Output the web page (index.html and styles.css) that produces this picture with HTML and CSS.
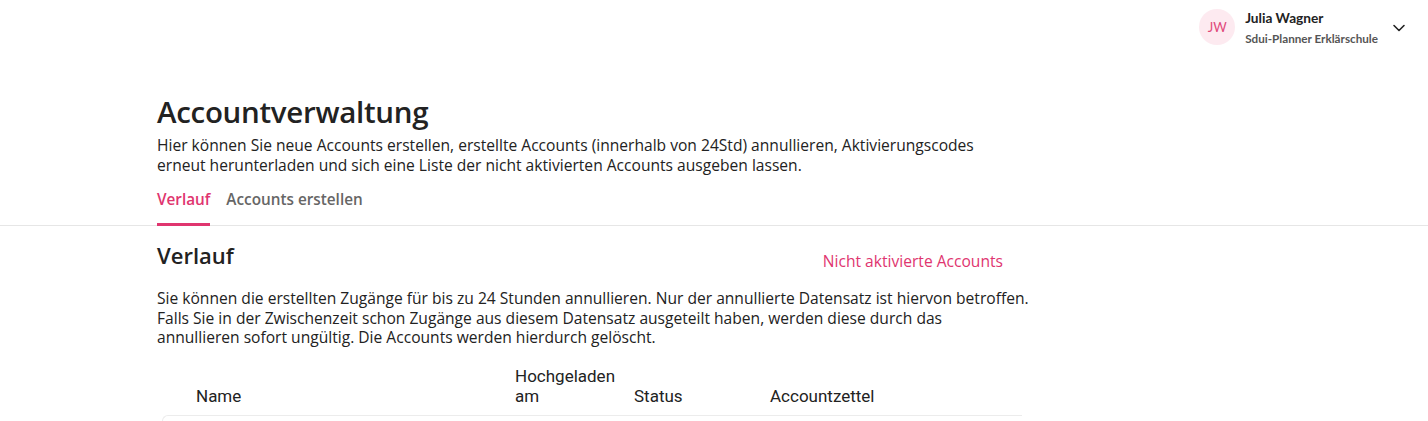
FILE: index.html
```html
<!DOCTYPE html>
<html lang="de">
<head>
<meta charset="utf-8">
<title>Accountverwaltung</title>
<link rel="stylesheet" href="styles.css">
</head>
<body>
<header class="topbar">
  <div class="user">
    <div class="avatar">JW</div>
    <div class="user-info">
      <div class="user-name">Julia Wagner</div>
      <div class="user-school">Sdui-Planner Erklärschule</div>
    </div>
    <svg class="chevron" width="14" height="14" viewBox="0 0 14 14"><path d="M2 4.5 L7 9.5 L12 4.5" fill="none" stroke="#222" stroke-width="1.6" stroke-linecap="round" stroke-linejoin="round"/></svg>
  </div>
</header>
<section class="page-head">
  <div class="container">
    <h1 class="title">Accountverwaltung</h1>
    <p class="intro">Hier können Sie neue Accounts erstellen, erstellte Accounts (innerhalb von 24Std) annullieren, Aktivierungscodes erneut herunterladen und sich eine Liste der nicht aktivierten Accounts ausgeben lassen.</p>
    <nav class="tabs">
      <a class="tab active">Verlauf</a>
      <a class="tab">Accounts erstellen</a>
    </nav>
  </div>
</section>
<main class="container content">
  <div class="section-head">
    <h2 class="section-title">Verlauf</h2>
    <a class="link">Nicht aktivierte Accounts</a>
  </div>
  <p class="text">Sie können die erstellten Zugänge für bis zu 24 Stunden annullieren. Nur der annullierte Datensatz ist hiervon betroffen. Falls Sie in der Zwischenzeit schon Zugänge aus diesem Datensatz ausgeteilt haben, werden diese durch das<br>annullieren sofort ungültig. Die Accounts werden hierdurch gelöscht.</p>
  <div class="table">
    <div class="thead">
      <div class="th th-name">Name</div>
      <div class="th th-date">Hochgeladen am</div>
      <div class="th th-status">Status</div>
      <div class="th th-sheet">Accountzettel</div>
    </div>
    <div class="tbody"></div>
  </div>
</main>
</body>
</html>
```
FILE: styles.css
```css
* { box-sizing: border-box; }
html, body { margin: 0; padding: 0; background: #fff; }
body {
  font-family: "Open Sans", "Lato", sans-serif;
  color: #222;
  overflow: hidden;
  height: 421px;
}
.topbar {
  display: flex;
  justify-content: flex-end;
  height: 56px;
  padding: 9px 22px 0 0;
}
.user {
  display: flex;
  align-items: flex-start;
}
.avatar {
  width: 36px;
  height: 36px;
  border-radius: 50%;
  background: #fdeaf0;
  color: #e0497a;
  font-family: "Lato", sans-serif;
  font-size: 13px;
  display: flex;
  align-items: center;
  justify-content: center;
}
.user-info {
  margin-left: 10px;
  padding-top: 1px;
  font-family: "Lato", sans-serif;
}
.user-name {
  font-size: 13.7px;
  font-weight: 700;
  color: #222;
  line-height: 16px;
}
.user-school {
  margin-top: 5px;
  font-size: 11.7px;
  font-weight: 700;
  color: #555;
  line-height: 14px;
}
.chevron {
  margin-left: 14px;
  margin-top: 12px;
}
.container {
  width: 880px;
  margin-left: 157px;
}
.page-head {
  border-bottom: 1px solid #e6e6e6;
  margin-top: 38px;
}
.title {
  margin: 0;
  font-size: 29.5px;
  font-weight: 600;
  line-height: 36px;
  color: #222;
  letter-spacing: -0.3px;
}
.intro {
  margin: 6px 0 0;
  font-size: 15.6px;
  line-height: 19.5px;
  color: #222;
  width: 840px;
}
.tabs {
  display: flex;
  gap: 16px;
  margin-top: 14px;
}
.tab {
  font-size: 15.3px;
  font-weight: 600;
  color: #666;
  padding-bottom: 14px;
  border-bottom: 3px solid transparent;
  line-height: 20px;
  margin-bottom: -1px;
}
.tab.active {
  color: #e0356f;
  border-bottom-color: #e0356f;
}
.content {
  padding-top: 12px;
}
.section-head {
  display: flex;
  justify-content: space-between;
  align-items: center;
  width: 846px;
}
.section-title {
  margin: 0;
  font-size: 22px;
  font-weight: 600;
  line-height: 30px;
}
.link {
  font-size: 15.6px;
  color: #e0356f;
  padding-top: 12px;
}
.text {
  margin: 17px 0 0;
  font-size: 15.6px;
  line-height: 19.5px;
  width: 876px;
}
.table {
  margin-top: 18px;
}
.thead {
  display: grid;
  grid-template-columns: 319px 119px 136px 1fr;
  align-items: end;
  padding-left: 39px;
  padding-bottom: 9px;
  font-family: "Roboto", sans-serif;
  font-size: 17px;
  line-height: 20px;
  color: #222;
}
.th-date { width: 100px; }
.tbody {
  margin-left: 5px;
  width: 860px;
  height: 6px;
  border: 1px solid #ececec;
  border-radius: 14px 0 0 0;
  border-right: none;
  border-bottom: none;
}
```
